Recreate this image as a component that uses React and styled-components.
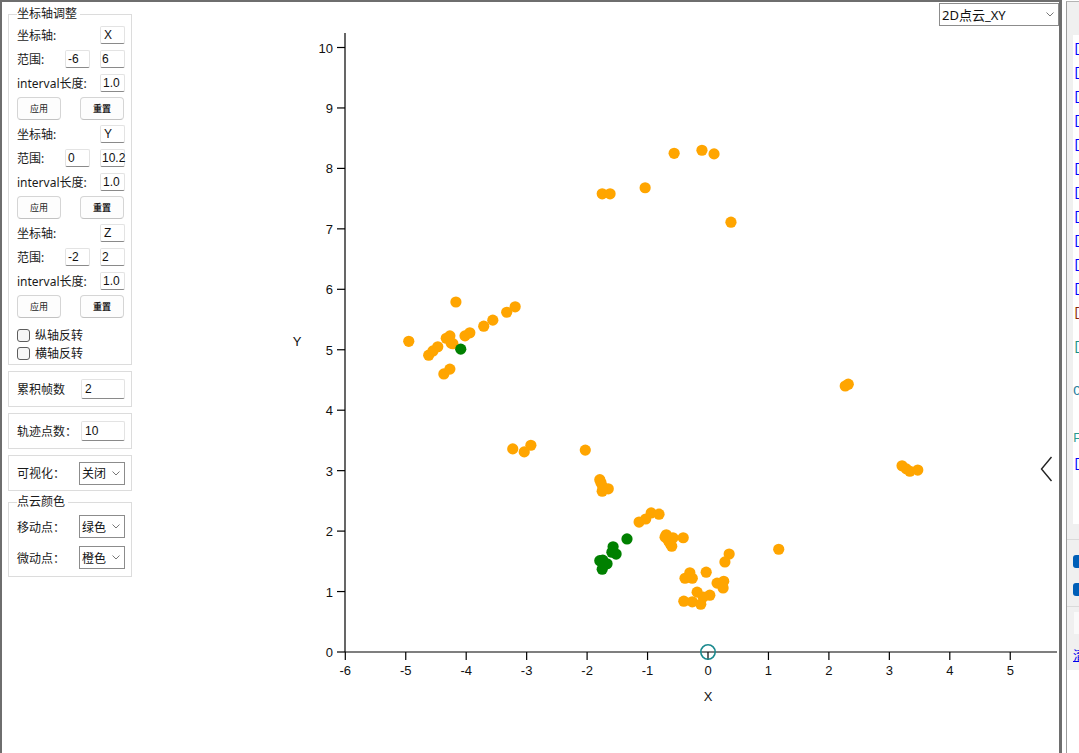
import React from "react"
import styled, { createGlobalStyle } from "styled-components"

const GlobalStyle = createGlobalStyle`
  html, body { margin: 0; padding: 0; background: #fff; }
  body {
    font-family: "Noto Sans", "Noto Sans CJK SC", sans-serif;
    font-size: 12px;
    color: #1a1a1a;
    overflow: hidden;
  }
`

// plot geometry (page pixels): origin and pixels per unit
const X0 = 708
const Y0 = 652
const S = 60.45
const px = (x) => X0 + x * S
const py = (y) => Y0 - y * S

const ORANGE = "#ffa500"
const GREEN = "#008000"

// micro-motion points
const slowPoints = [
  [-0.56, 8.25], [-0.1, 8.3], [0.1, 8.24], [-1.04, 7.68], [-1.75, 7.58], [-1.62, 7.58], [0.38, 7.11],
  [-4.17, 5.79], [-4.95, 5.14], [-4.62, 4.91], [-4.55, 4.98], [-4.47, 5.05], [-4.33, 5.19], [-4.27, 5.23],
  [-4.25, 5.11], [-4.22, 5.1], [-4.02, 5.23], [-3.94, 5.28], [-3.71, 5.39], [-3.56, 5.49], [-3.33, 5.62],
  [-3.19, 5.71], [-4.37, 4.6], [-4.27, 4.68],
  [-3.23, 3.36], [-3.04, 3.31], [-2.93, 3.42], [-2.03, 3.34],
  [-1.77, 2.8], [-1.74, 2.73], [-1.65, 2.7], [-1.75, 2.66], [-1.79, 2.85],
  [-1.14, 2.15], [-1.03, 2.2], [-0.94, 2.3], [-0.81, 2.28],
  [-0.69, 1.94], [-0.66, 1.85], [-0.6, 1.75], [-0.63, 1.8], [-0.71, 1.9], [-0.58, 1.89], [-0.41, 1.89],
  [0.35, 1.62], [0.28, 1.49], [1.17, 1.7],
  [-0.03, 1.32], [-0.3, 1.31], [-0.38, 1.22], [-0.26, 1.22], [0.15, 1.14], [0.26, 1.17], [0.25, 1.06],
  [-0.18, 0.99], [0.03, 0.94], [-0.08, 0.91], [-0.4, 0.84], [-0.26, 0.83], [-0.12, 0.79],
  [2.27, 4.4], [2.32, 4.43], [3.21, 3.08], [3.28, 3.03], [3.34, 2.99], [3.47, 3.01],
]

// moving points
const movingPoints = [
  [-4.09, 5.01],
  [-1.34, 1.87], [-1.57, 1.74], [-1.52, 1.62], [-1.59, 1.65],
  [-1.74, 1.52], [-1.79, 1.51], [-1.67, 1.46], [-1.75, 1.37],
]

const xTicks = [-6, -5, -4, -3, -2, -1, 0, 1, 2, 3, 4, 5]
const yTicks = [0, 1, 2, 3, 4, 5, 6, 7, 8, 9, 10]

const Page = styled.div`
  display: flex;
  height: 100vh;
`

const MainPanel = styled.div`
  display: flex;
  width: 1062px;
  flex-shrink: 0;
  box-sizing: border-box;
  border: 2px solid #6e6e6e;
  border-right-width: 3px;
  border-bottom: none;
`

const Sidebar = styled.div`
  display: flex;
  flex-direction: column;
  width: 124px;
  margin-left: 6px;
  padding-top: 5px;
  gap: 6px;
  flex-shrink: 0;
`

const GroupBox = styled.fieldset`
  margin: 0;
  margin-top: ${(p) => p.$mt || 0}px;
  padding: 2px 6px ${(p) => p.$pb || 2}px 8px;
  border: 1px solid #dcdcdc;
  display: flex;
  flex-direction: column;
  min-width: 0;
`

const Legend = styled.legend`
  padding: 0 3px 0 0;
  margin-left: 0;
  font-size: 12px;
  line-height: 14px;
`

const Card = styled.div`
  box-sizing: border-box;
  height: 36px;
  border: 1px solid #dcdcdc;
  display: flex;
  align-items: center;
  justify-content: space-between;
  padding: 0 6px 0 8px;
`

const Row = styled.div`
  display: flex;
  align-items: center;
  height: ${(p) => p.$h || 24}px;
  gap: 10px;
`

const Label = styled.span`
  flex: 1;
  white-space: nowrap;
  font-size: 12px;
`

const TextBox = styled.div`
  box-sizing: border-box;
  width: ${(p) => p.$w || 25}px;
  height: ${(p) => p.$h || 18}px;
  border: 1px solid #e3e3e3;
  border-bottom-color: #8a8a8a;
  border-radius: 2px;
  background: #fff;
  padding-left: ${(p) => p.$pl || 3}px;
  display: flex;
  align-items: center;
  font-family: "Liberation Sans", "Noto Sans", sans-serif;
  font-size: 12px;
  color: #111;
`

const ButtonRow = styled.div`
  display: flex;
  align-items: center;
  justify-content: space-between;
  height: 27px;
  padding-right: 1px;
`

const Button = styled.button`
  box-sizing: border-box;
  width: 44px;
  height: 23px;
  border: 1px solid #d5d5d5;
  border-bottom-color: #c2c2c2;
  border-radius: 4px;
  background: #fdfdfd;
  font-family: "Noto Sans CJK SC", sans-serif;
  font-size: 9px;
  font-weight: ${(p) => (p.$bold ? 700 : 400)};
  color: #222;
  padding: 0;
`

const CheckRow = styled.label`
  display: flex;
  align-items: center;
  gap: 5px;
  height: 18px;
  margin-top: ${(p) => p.$mt || 0}px;
  font-size: 12px;
`

const CheckBox = styled.span`
  box-sizing: border-box;
  width: 13px;
  height: 13px;
  border: 1px solid #5d5d5d;
  border-radius: 3px;
  background: #f6f6f6;
`

const ComboBox = styled.div`
  box-sizing: border-box;
  width: ${(p) => p.$w || 46}px;
  height: 23px;
  border: 1px solid #8c8c8c;
  background: #fff;
  display: flex;
  align-items: center;
  justify-content: space-between;
  padding: 0 4px 0 2px;
  font-size: ${(p) => p.$fs || 12}px;
  color: #111;
  white-space: nowrap;
`

const Chevron = ({ size = 8 }) => (
  <svg width={size} height={size / 2 + 1} viewBox="0 0 8 5">
    <polyline points="0.5,0.5 4,4 7.5,0.5" fill="none" stroke="#777" strokeWidth="1" />
  </svg>
)

const ChartArea = styled.div`
  flex: 1;
  position: relative;
  display: flex;
  flex-direction: column;
  min-width: 0;
`

const TopBar = styled.div`
  display: flex;
  justify-content: flex-end;
  height: 24px;
  padding-top: 1px;
  box-sizing: border-box;
`

const Plot = styled.svg`
  display: block;
  font-family: "Liberation Sans", Arial, sans-serif;
`

const CollapseToggle = styled.button`
  position: absolute;
  right: 6px;
  top: 454px;
  width: 13px;
  height: 26px;
  padding: 0;
  border: none;
  background: transparent;
`

const RightPanel = styled.div`
  flex: 1;
  margin-left: 4px;
  margin-top: 1px;
  border-left: 1px solid #9c9c9c;
  border-top: 1px solid #b4b4b4;
  background: #f0f0f0;
  display: flex;
  flex-direction: column;
  overflow: hidden;
`

const LogList = styled.div`
  margin-top: 33px;
  margin-left: 6px;
  height: 489px;
  background: #fff;
  padding-top: 2px;
  box-sizing: border-box;
  font-family: "Liberation Mono", monospace;
  font-size: 13px;
  white-space: nowrap;
`

const LogLine = styled.div`
  height: 24px;
  line-height: 24px;
  margin-top: ${(p) => p.$mt || 0}px;
  color: ${(p) => p.$c || "#0000ff"};
  span { color: ${(p) => p.$c2 || "#c060e0"}; }
`

const Separator = styled.div`
  height: 1px;
  background: #dadada;
  margin-top: ${(p) => p.$mt || 0}px;
`

const MiniCheck = styled.span`
  display: block;
  width: 13px;
  height: 13px;
  margin-left: 6px;
  margin-top: ${(p) => p.$mt}px;
  border-radius: 3px;
  background: #005fb8;
`

const ToolStrip = styled.div`
  display: flex;
  align-items: center;
  gap: 3px;
  height: 24px;
  margin-top: 4px;
  padding-left: 4px;
`

const Grip = styled.span`
  width: 2px;
  height: 13px;
  background: radial-gradient(circle, #a8a8a8 1px, transparent 1.2px) 0 0 / 2px 4px;
`

const ToolBox = styled.span`
  width: 20px;
  height: 22px;
  background: #fafafa;
`

const LinkText = styled.div`
  margin-top: 10px;
  padding-left: 6px;
  color: #0000ee;
  font-size: 13px;
  text-decoration: underline;
  white-space: nowrap;
`

const WhiteFill = styled.div`
  flex: 1;
  margin-top: 6px;
  background: #fff;
`

const AxisSection = ({ axis, min, max }) => (
  <>
    <Row>
      <Label>坐标轴:</Label>
      <TextBox>{axis}</TextBox>
    </Row>
    <Row>
      <Label>范围:</Label>
      <TextBox $pl={2}>{min}</TextBox>
      <TextBox $pl={1}>{max}</TextBox>
    </Row>
    <Row>
      <Label>interval长度:</Label>
      <TextBox $pl={2}>1.0</TextBox>
    </Row>
    <ButtonRow>
      <Button>应用</Button>
      <Button $bold>重置</Button>
    </ButtonRow>
  </>
)

const Chart = () => (
  <Plot width="927" height="727" viewBox="132 26 927 727">
    <line x1="345" y1="33" x2="345" y2="652" stroke="#000" strokeWidth="1.2" />
    <line x1="345" y1="652" x2="1057" y2="652" stroke="#000" strokeWidth="1.2" />
    {yTicks.map((t) => (
      <g key={`y${t}`}>
        <line x1="337" y1={py(t)} x2="345" y2={py(t)} stroke="#000" strokeWidth="1.2" />
        <text x="333" y={py(t) + 5} textAnchor="end" fontSize="13" fill="#111">{t}</text>
      </g>
    ))}
    {xTicks.map((t) => (
      <g key={`x${t}`}>
        <line x1={px(t)} y1="652" x2={px(t)} y2="660" stroke="#000" strokeWidth="1.2" />
        <text x={px(t)} y="675" textAnchor="middle" fontSize="13" fill="#111">{t}</text>
      </g>
    ))}
    <text x="708" y="701" textAnchor="middle" fontSize="13" fill="#111">X</text>
    <text x="297" y="346" textAnchor="middle" fontSize="13" fill="#111">Y</text>
    {slowPoints.map(([x, y], i) => (
      <circle key={`s${i}`} cx={px(x)} cy={py(y)} r="5.6" fill={ORANGE} />
    ))}
    {movingPoints.map(([x, y], i) => (
      <circle key={`m${i}`} cx={px(x)} cy={py(y)} r="5.6" fill={GREEN} />
    ))}
    <circle cx={X0} cy={Y0} r="7.2" fill="none" stroke="#1b8a8f" strokeWidth="1.6" />
  </Plot>
)

const logColors = Array.from({ length: 11 }, () => ["#0000ff", "#c060e0"]).concat([["#8b2500", "#e0a030"]])

export default function App() {
  return (
    <Page>
      <GlobalStyle />
      <MainPanel>
        <Sidebar>
          <GroupBox>
            <Legend>坐标轴调整</Legend>
            <AxisSection axis="X" min="-6" max="6" />
            <AxisSection axis="Y" min="0" max="10.2" />
            <AxisSection axis="Z" min="-2" max="2" />
            <CheckRow $mt={6}><CheckBox />纵轴反转</CheckRow>
            <CheckRow><CheckBox />横轴反转</CheckRow>
          </GroupBox>
          <Card>
            <Label>累积帧数</Label>
            <TextBox $w={44} $h={20}>2</TextBox>
          </Card>
          <Card>
            <Label>轨迹点数：</Label>
            <TextBox $w={44} $h={20}>10</TextBox>
          </Card>
          <Card>
            <Label>可视化：</Label>
            <ComboBox>关闭<Chevron /></ComboBox>
          </Card>
          <GroupBox $mt={-2} $pb={3}>
            <Legend>点云颜色</Legend>
            <Row $h={31}>
              <Label>移动点：</Label>
              <ComboBox>绿色<Chevron /></ComboBox>
            </Row>
            <Row $h={31}>
              <Label>微动点：</Label>
              <ComboBox>橙色<Chevron /></ComboBox>
            </Row>
          </GroupBox>
        </Sidebar>
        <ChartArea>
          <TopBar>
            <ComboBox $w={120} $fs={13}>2D点云_XY<Chevron /></ComboBox>
          </TopBar>
          <Chart />
          <CollapseToggle aria-label="收起">
            <svg width="13" height="26" viewBox="0 0 13 26">
              <polyline points="11.5,1 1.5,13 11.5,25" fill="none" stroke="#222" strokeWidth="1.4" />
            </svg>
          </CollapseToggle>
        </ChartArea>
      </MainPanel>
      <RightPanel>
        <LogList>
          {logColors.map(([c, c2], i) => (
            <LogLine key={i} $c={c} $c2={c2}>[<span>1</span></LogLine>
          ))}
          <LogLine $mt={10} $c="#1a9080" $c2="#1a9080">[</LogLine>
          <LogLine $mt={21} $c="#2a7fa0">C</LogLine>
          <LogLine $mt={23} $c="#2a9a90">F</LogLine>
          <LogLine $mt={1} $c="#0000ff">[<span>1</span></LogLine>
        </LogList>
        <Separator $mt={15} />
        <MiniCheck $mt={15} />
        <MiniCheck $mt={15} />
        <Separator $mt={10} />
        <ToolStrip>
          <Grip />
          <ToolBox />
        </ToolStrip>
        <LinkText>清空</LinkText>
        <WhiteFill />
      </RightPanel>
    </Page>
  )
}
